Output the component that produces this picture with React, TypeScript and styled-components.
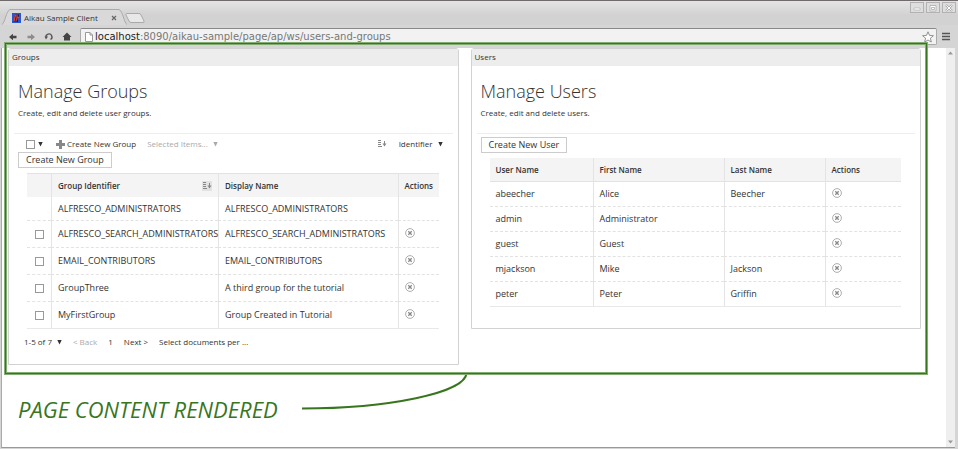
import React from "react";
import styled, { createGlobalStyle } from "styled-components";

const GREEN = "#38761d";
const SANS = '"Open Sans", "Noto Sans", sans-serif';

const GlobalStyle = createGlobalStyle`
  * { box-sizing: border-box; }
  html, body, #root { height: 100%; }
  body { margin: 0; background: #bdbdbd; color: #333; font: 9px/12px ${SANS}; }
  button, input { font: inherit; color: inherit; margin: 0; }
`;

/* Browser window */

const Window = styled.div`
  min-height: 100%;
  display: flex;
  flex-direction: column;
  background: #d5d5d5;
  border-top: 1px solid #6f6b6b;
`;

const TitleBar = styled.header`
  display: flex;
  justify-content: space-between;
  height: 24px;
  background: linear-gradient(#e4e4e4, #d2d2d2 14px);
`;

const TabStrip = styled.div`
  display: flex;
  align-items: flex-end;
  padding-left: 2px;
`;

const TabEdge = styled.svg`
  display: block;
  width: 8px;
  height: 16px;
`;

const Tab = styled.div`
  display: flex;
  align-items: center;
  width: 109px;
  height: 16px;
  padding: 0 2px;
  background: #d9d9d9;
  border-top: 1px solid #aaa;
`;

const TabTitle = styled.span`
  flex: 1;
  margin-left: 3px;
  font-size: 8px;
  white-space: nowrap;
  color: #333;
`;

const PlainButton = styled.button`
  display: inline-flex;
  align-items: center;
  padding: 0;
  border: 0;
  background: none;
  white-space: nowrap;
  &:disabled { color: #aaa; }
`;

const NewTab = styled(PlainButton)`
  align-self: flex-end;
  margin: 0 0 2px -2px;
`;

const WindowControls = styled.div`
  display: flex;
  gap: 2px;
  padding: 1px 2px 0 0;
`;

const WindowControl = styled(PlainButton)`
  justify-content: center;
  width: 14px;
  height: 11px;
  border: 1px solid #b2b2b2;
  background: #dedede;
`;

const Toolbar = styled.div`
  display: flex;
  align-items: center;
  height: 23px;
  padding: 0 8px;
  background: #d5d5d5;
`;

const NavButton = styled(PlainButton)`
  justify-content: center;
  width: 10px;
  height: 16px;
  margin-right: 8px;
  &:last-of-type { margin-right: 6px; }
`;

const AddressBar = styled.form`
  flex: 1;
  display: flex;
  align-items: center;
  height: 17px;
  margin-right: 5px;
  padding: 0 2px 0 4px;
  background: #f2f2f2;
  border: 1px solid #aaa;
  border-top-color: #888;
  border-radius: 2px;
`;

const Address = styled.div`
  flex: 1;
  margin-left: 2px;
  font: 10px/14px "DejaVu Sans", sans-serif;
  color: #777;
  strong { font-weight: 400; color: #222; }
`;

const Viewport = styled.div`
  flex: 1;
  display: flex;
  margin: 0 3px 1px 1px;
  border-bottom: 1px solid #999;
  border-left: 1px solid #aaa;
  background: #fff;
`;

const Scrollbar = styled.div`
  display: flex;
  flex-direction: column;
  justify-content: space-between;
  align-items: center;
  width: 9px;
  padding: 3px 0;
  background: #efefef;
`;

/* Page */

const Page = styled.main`
  flex: 1;
  padding: 0 25px 0 6px;
`;

const Panels = styled.div`
  position: relative;
  display: grid;
  grid-template-columns: 1fr 1fr;
  gap: 12px;
  align-items: start;
`;

const Highlight = styled.div`
  position: absolute;
  inset: -5px -6px -9px -3px;
  border: 1px solid ${GREEN};
  box-shadow: 0 0 0 1px #82ad70, inset 0 0 0 1px #82ad70;
  pointer-events: none;
`;

const Panel = styled.section<{ $bottom: number }>`
  padding-bottom: ${(p) => p.$bottom}px;
  border: 1px solid #d2d2d2;
  border-radius: 3px 3px 0 0;
  background: #fff;
`;

const PanelTitle = styled.h2`
  margin: 0;
  padding: 2px 3px 3px;
  font-size: 8px;
  font-weight: 400;
  background: #ededed;
`;

const PanelBody = styled.div`
  padding: 0 5px;
`;

const Heading = styled.h1`
  margin: 0;
  padding: 13px 4px 0;
  font-size: 18px;
  line-height: 24px;
  font-weight: 300;
`;

const Intro = styled.p`
  margin: 0;
  padding: 4px 4px 14px;
  font-size: 8px;
  border-bottom: 1px solid #eee;
`;

const ListTools = styled.div`
  display: flex;
  align-items: center;
  height: 18px;
  padding: 2px 10px 0 12px;
  font-size: 8px;
`;

const Tool = styled(PlainButton)<{ $gap?: number; $push?: boolean }>`
  gap: 5px;
  margin-left: ${(p) => (p.$push ? "auto" : `${p.$gap ?? 12}px`)};
`;

const AddTool = styled(Tool)`
  gap: 2px;
`;

const CreateButton = styled.button<{ $top: number }>`
  display: block;
  height: 16px;
  margin: ${(p) => p.$top}px 0 0 4px;
  padding: 0 7px;
  border: 1px solid #ccc;
  background: #fff;
  line-height: 14px;
`;

const Tick = styled.input.attrs({ type: "checkbox" })`
  appearance: none;
  display: block;
  width: 9px;
  height: 9px;
  border: 1px solid #999;
  background: #fff;
  &:checked { background: #777; }
`;

const Table = styled.table<{ $ruled: "top" | "bottom" }>`
  width: calc(100% - 27px);
  margin: 5px 0 0 13px;
  table-layout: fixed;
  border-spacing: 0;

  th, td { padding: 0 6px; text-align: left; white-space: nowrap; }
  th + th, td + td { border-left: 1px solid #e4e4e4; }
  th {
    height: 24px;
    font-size: 8px;
    font-weight: 600;
    background: #f4f4f4;
    border-${(p) => p.$ruled}: 1px solid #e2e2e2;
  }
  td { border-bottom: 1px dashed #e2e2e2; }
  tr:last-child td { border-bottom: 1px solid #e8e8e8; }
`;

const Row = styled.tr<{ $height: number }>`
  height: ${(p) => p.$height}px;
`;

const HeaderLabel = styled.div`
  display: flex;
  align-items: center;
  justify-content: space-between;
`;

const TickCell = styled.td`
  && { padding-left: 8px; }
`;

const ActionCell = styled.td`
  button { display: flex; margin-top: -3px; }
`;

const Pager = styled.nav`
  display: flex;
  align-items: center;
  gap: 11px;
  padding: 7px 10px 0;
  font-size: 8px;
`;

const Annotation = styled.div`
  display: grid;
  grid-template-columns: 284px 166px;
  align-items: end;
  margin: 8px 0 0 10px;
  color: ${GREEN};
`;

const Note = styled.p`
  margin: 0 0 -11px;
  font-size: 22px;
  line-height: 24px;
  font-style: italic;
  white-space: nowrap;
`;

const Curve = styled.svg`
  display: block;
  width: 166px;
  height: 37px;
`;

/* Icons */

const Caret = ({ dim }: { dim?: boolean }) => (
  <svg width="5" height="6" viewBox="0 0 5 6" aria-hidden="true">
    <path d="M.3 1h4.400L2.500 5.500z" fill={dim ? "#aaa" : "#333"} />
  </svg>
);

const SortIcon = ({ boxed }: { boxed?: boolean }) => (
  <svg width="10" height="10" viewBox="0 0 10 10" fill="none" aria-label="Sort">
    {boxed && <path d="M0 0h10v10H0z" fill="#e2e2e2" />}
    <path d="M1 1.500h3M1 3.500h3M1 5.500h3M1 7.500h4" stroke="#888" />
    <path d="M7.500 2v5" stroke="#888" />
    <path d="M5.500 4.500h4L7.500 7.500z" fill="#888" />
  </svg>
);

const DeleteIcon = () => (
  <svg width="10" height="10" viewBox="0 0 10 10" fill="none" stroke="#999" aria-hidden="true">
    <circle cx="5" cy="5" r="4.4" strokeWidth=".8" />
    <path d="M3.3 3.3l3.4 3.4M6.7 3.3L3.3 6.7" stroke="#888" strokeWidth="1.3" />
  </svg>
);

const Arrow = ({ flip, dim }: { flip?: boolean; dim?: boolean }) => (
  <svg width="10" height="8" viewBox="0 0 10 8" aria-hidden="true">
    <path
      d={flip ? "M9 4L5 .8v2H1.500v2.400H5v2z" : "M1 4L5 .8v2h3.500v2.400H5v2z"}
      fill={dim ? "#8c8c8c" : "#444"}
    />
  </svg>
);

const Favicon = () => (
  <svg width="9" height="10" viewBox="0 0 9 10" aria-hidden="true">
    <path d="M0 0h9v10H0z" fill="#2457d6" />
    <path d="M3 1.500h4V5H6v4H4.500V6.500H3.500V9H1.500z" fill="#141c3c" />
    <path d="M3.500 1.500L2 8.500M5 1.500v3h2.500M5 4.500L4.500 7.500" stroke="#e0402c" strokeWidth="1.300" fill="none" />
  </svg>
);

/* Data */

const groups = [
  { id: "ALFRESCO_ADMINISTRATORS", name: "ALFRESCO_ADMINISTRATORS", locked: true },
  { id: "ALFRESCO_SEARCH_ADMINISTRATORS", name: "ALFRESCO_SEARCH_ADMINISTRATORS" },
  { id: "EMAIL_CONTRIBUTORS", name: "EMAIL_CONTRIBUTORS" },
  { id: "GroupThree", name: "A third group for the tutorial" },
  { id: "MyFirstGroup", name: "Group Created in Tutorial" },
];

const users = [
  ["abeecher", "Alice", "Beecher"],
  ["admin", "Administrator", ""],
  ["guest", "Guest", ""],
  ["mjackson", "Mike", "Jackson"],
  ["peter", "Peter", "Griffin"],
];

const BrowserChrome = () => (
  <>
    <TitleBar>
      <TabStrip>
        <TabEdge viewBox="0 0 8 16">
          <path d="M0 16C3 14 4 2 8 .5V16z" fill="#d9d9d9" />
          <path d="M0 15.500C3 14 4 2 8 .5" fill="none" stroke="#aaa" />
        </TabEdge>
        <Tab>
          <Favicon />
          <TabTitle>Aikau Sample Client</TabTitle>
          <PlainButton aria-label="Close tab">
            <svg width="6" height="6" viewBox="0 0 6 6" stroke="#666" strokeWidth="1.200">
              <path d="M1 1l4 4M5 1L1 5" />
            </svg>
          </PlainButton>
        </Tab>
        <TabEdge viewBox="0 0 8 16">
          <path d="M0 .5C4 2 5 14 8 16H0z" fill="#d9d9d9" />
          <path d="M0 .5C4 2 5 14 8 15.500" fill="none" stroke="#aaa" />
        </TabEdge>
        <NewTab aria-label="New tab">
          <svg width="20" height="10" viewBox="0 0 20 10">
            <path d="M1.500.5H14q1.500 0 2 1.500l3 6q.5 1.500-1 1.500H6q-1.500 0-2-1.500L1 2Q.5.5 1.500.5z" fill="#e8e8e8" stroke="#aaa" />
          </svg>
        </NewTab>
      </TabStrip>
      <WindowControls>
        <WindowControl aria-label="Minimize">
          <svg width="8" height="8" viewBox="0 0 8 8"><path d="M1 4h6v2H1z" fill="#fff" stroke="#aaa" strokeWidth=".6" /></svg>
        </WindowControl>
        <WindowControl aria-label="Maximize">
          <svg width="8" height="8" viewBox="0 0 8 8" fill="#fff" stroke="#aaa" strokeWidth=".8"><path d="M1 1.500h6v5.500H1zM2.500 3.500h3V5.500h-3z" /></svg>
        </WindowControl>
        <WindowControl aria-label="Close">
          <svg width="8" height="8" viewBox="0 0 8 8"><path d="M1 1l6 6M7 1L1 7" stroke="#aaa" strokeWidth="2.200" /><path d="M1.300 1.300l5.400 5.400M6.700 1.300L1.300 6.700" stroke="#fff" /></svg>
        </WindowControl>
      </WindowControls>
    </TitleBar>
    <Toolbar>
      <NavButton aria-label="Back"><Arrow /></NavButton>
      <NavButton aria-label="Forward"><Arrow flip dim /></NavButton>
      <NavButton aria-label="Reload">
        <svg width="10" height="10" viewBox="0 0 10 10">
          <path d="M2 5.500A3 3 0 1 1 6.500 7.500" fill="none" stroke="#555" strokeWidth="1.400" />
          <path d="M.5 4.500h3.500L2 7.500z" fill="#555" />
        </svg>
      </NavButton>
      <NavButton aria-label="Home">
        <svg width="10" height="9" viewBox="0 0 10 9"><path d="M5 .5L.5 5H2v3.500h6V5h1.500z" fill="#444" /></svg>
      </NavButton>
      <AddressBar>
        <svg width="8" height="10" viewBox="0 0 8 10" aria-hidden="true">
          <path d="M.5.5H5L7.500 3v6.500h-7zM5 .5V3h2.500" fill="#fff" stroke="#999" />
        </svg>
        <Address><strong>localhost</strong>:8090/aikau-sample/page/ap/ws/users-and-groups</Address>
        <PlainButton type="button" aria-label="Bookmark">
          <svg width="12" height="12" viewBox="0 0 12 12">
            <path d="M6 .8l1.500 3.600 3.900.3-3 2.500.9 3.800L6 9l-3.300 2 .9-3.800-3-2.500 3.900-.3z" fill="#fff" stroke="#888" strokeWidth=".9" />
          </svg>
        </PlainButton>
      </AddressBar>
      <PlainButton aria-label="Menu">
        <svg width="8" height="10" viewBox="0 0 8 10"><path d="M0 1.500h8M0 4.500h8M0 7.500h8" stroke="#555" strokeWidth="1.500" /></svg>
      </PlainButton>
    </Toolbar>
  </>
);

const GroupsPanel = () => (
  <Panel $bottom={16}>
    <PanelTitle>Groups</PanelTitle>
    <PanelBody>
      <Heading>Manage Groups</Heading>
      <Intro>Create, edit and delete user groups.</Intro>
      <ListTools>
        <Tick aria-label="Select all groups" />
        <Tool $gap={3} aria-label="Selection options"><Caret /></Tool>
        <AddTool $gap={13}>
          <svg width="9" height="9" viewBox="0 0 9 9"><path d="M3 0h3v3h3v3H6v3H3V6H0V3h3z" fill="#888" /></svg>
          Create New Group
        </AddTool>
        <Tool $gap={11} disabled>Selected Items... <Caret dim /></Tool>
        <Tool $push aria-label="Sort direction"><SortIcon /></Tool>
        <Tool>Identifier <Caret /></Tool>
      </ListTools>
      <CreateButton $top={0}>Create New Group</CreateButton>
      <Table $ruled="top">
        <colgroup>
          <col width="24" />
          <col width="167" />
          <col />
          <col width="41" />
        </colgroup>
        <thead>
          <tr>
            <th aria-label="Selected" />
            <th><HeaderLabel>Group Identifier <SortIcon boxed /></HeaderLabel></th>
            <th>Display Name</th>
            <th>Actions</th>
          </tr>
        </thead>
        <tbody>
          {groups.map((g) => (
            <Row key={g.id} $height={g.locked ? 24 : 27}>
              <TickCell>{!g.locked && <Tick aria-label={`Select ${g.id}`} />}</TickCell>
              <td>{g.id}</td>
              <td>{g.name}</td>
              <ActionCell>
                {!g.locked && <PlainButton aria-label={`Delete ${g.id}`}><DeleteIcon /></PlainButton>}
              </ActionCell>
            </Row>
          ))}
        </tbody>
      </Table>
      <Pager>
        <Tool $gap={0}>1-5 of 7 <Caret /></Tool>
        <PlainButton disabled>&lt; Back</PlainButton>
        <span>1</span>
        <PlainButton>Next &gt;</PlainButton>
        <PlainButton>Select documents per ...</PlainButton>
      </Pager>
    </PanelBody>
  </Panel>
);

const UsersPanel = () => (
  <Panel $bottom={21}>
    <PanelTitle>Users</PanelTitle>
    <PanelBody>
      <Heading>Manage Users</Heading>
      <Intro>Create, edit and delete users.</Intro>
      <CreateButton $top={3}>Create New User</CreateButton>
      <Table $ruled="bottom">
        <colgroup>
          <col width="103" />
          <col width="131" />
          <col width="101" />
          <col />
        </colgroup>
        <thead>
          <tr>
            <th>User Name</th>
            <th>First Name</th>
            <th>Last Name</th>
            <th>Actions</th>
          </tr>
        </thead>
        <tbody>
          {users.map(([id, first, last]) => (
            <Row key={id} $height={25}>
              <td>{id}</td>
              <td>{first}</td>
              <td>{last}</td>
              <ActionCell>
                <PlainButton aria-label={`Delete ${id}`}><DeleteIcon /></PlainButton>
              </ActionCell>
            </Row>
          ))}
        </tbody>
      </Table>
    </PanelBody>
  </Panel>
);

export default function App() {
  return (
    <>
      <GlobalStyle />
      <Window>
        <BrowserChrome />
        <Viewport>
          <Page>
            <Panels>
              <GroupsPanel />
              <UsersPanel />
              <Highlight />
            </Panels>
            <Annotation>
              <Note>PAGE CONTENT RENDERED</Note>
              <Curve viewBox="0 0 166 37">
                <path d="M0 35.500C85 35.500 164 20 164.500 0" fill="none" stroke={GREEN} strokeWidth="2" />
              </Curve>
            </Annotation>
          </Page>
          <Scrollbar>
            <svg width="5" height="4" viewBox="0 0 5 4"><path d="M0 3.500L2.500.5 5 3.500z" fill="#999" /></svg>
            <svg width="5" height="4" viewBox="0 0 5 4"><path d="M0 .5h5L2.500 3.500z" fill="#999" /></svg>
          </Scrollbar>
        </Viewport>
      </Window>
    </>
  );
}
